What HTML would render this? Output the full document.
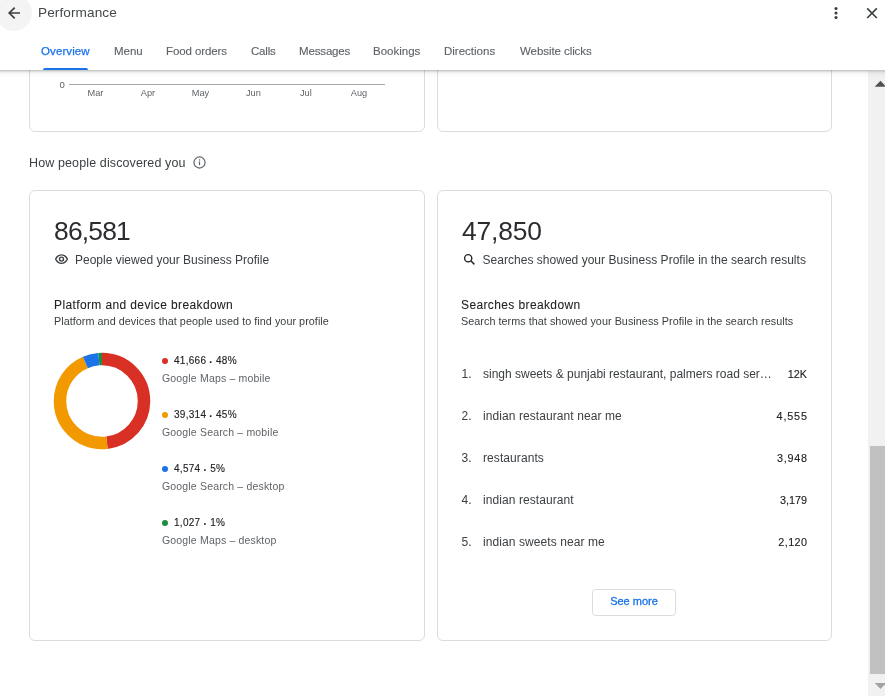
<!DOCTYPE html>
<html><head><meta charset="utf-8">
<style>
*{box-sizing:border-box;margin:0;padding:0}
html,body{width:885px;height:696px;overflow:hidden;background:#fff}
body{will-change:transform;font-family:"Liberation Sans",Arial,sans-serif;color:#202124;position:relative}
.abs{position:absolute}
.hdr{position:absolute;left:-20px;top:0;width:925px;height:70px;padding-left:20px;background:#fff;z-index:5;box-shadow:0 1px 2px rgba(60,64,67,.3),0 2px 6px rgba(60,64,67,.15)}
.hin{position:absolute;left:20px;top:0;width:885px;height:70px}
.backc{position:absolute;left:-4px;top:-5px;width:36px;height:36px;border-radius:50%;background:#f4f4f4}
.title{position:absolute;left:38px;top:2.8px;font-size:13.6px;line-height:20px;color:#46494c;letter-spacing:.1px}
.tab{position:absolute;top:44px;font-size:11.5px;line-height:14px;color:#5f6368;white-space:nowrap;-webkit-text-stroke:.12px #5f6368}
.tab.on{color:#1a73e8;-webkit-text-stroke:.25px #1a73e8;letter-spacing:.1px}
.uline{position:absolute;left:43px;top:68px;width:45px;height:2px;background:#1a73e8;border-radius:2px 2px 0 0}
.card{position:absolute;border:1px solid #dadce0;border-radius:6px;background:#fff}
.sbar{position:absolute;left:868px;top:71px;width:17px;height:625px;background:#f1f1f1}
.thumb{position:absolute;left:870px;top:446px;width:15px;height:228px;background:#c1c1c1}
.big{position:absolute;font-size:26.4px;line-height:30px;color:#2a2c2f;letter-spacing:-.8px}
.sub{position:absolute;font-size:12px;line-height:14px;color:#3c4043;white-space:nowrap}
.h3{position:absolute;font-size:12px;line-height:14px;color:#202124;white-space:nowrap;letter-spacing:.38px;-webkit-text-stroke:.07px #202124}
.sm{position:absolute;font-size:10.8px;letter-spacing:.04px;line-height:12px;color:#3c4043;white-space:nowrap}
.lg1{position:absolute;font-size:10px;line-height:12px;color:#202124;white-space:nowrap;letter-spacing:.28px;-webkit-text-stroke:.12px #202124}
.lg1 b{position:relative;top:1.7px}
.lg2{position:absolute;font-size:10.5px;line-height:14px;color:#5f6368;white-space:nowrap;letter-spacing:.17px}
.dot{position:absolute;width:6px;height:6px;border-radius:50%}
.row{position:absolute;font-size:12px;line-height:14px;color:#3c4043;white-space:nowrap;letter-spacing:.08px}
.val{position:absolute;font-size:10.8px;line-height:14px;color:#202124;white-space:nowrap;text-align:right;right:0;-webkit-text-stroke:.12px #202124}
.ax{position:absolute;font-size:9.2px;line-height:10px;color:#5f6368;white-space:nowrap}
</style></head><body>

<!-- content -->
<div class="card" style="left:29px;top:40px;width:396px;height:92px"></div>
<div class="card" style="left:437px;top:40px;width:395px;height:92px"></div>
<div class="abs" style="left:69px;top:84px;width:316px;height:1px;background:#a8a8a8"></div>
<div class="ax" style="left:59.6px;top:79.6px;font-size:9.6px">0</div>
<div class="ax" style="left:87.5px;top:88px">Mar</div>
<div class="ax" style="left:140.8px;top:88px">Apr</div>
<div class="ax" style="left:191.8px;top:88px">May</div>
<div class="ax" style="left:246px;top:88px">Jun</div>
<div class="ax" style="left:300px;top:88px">Jul</div>
<div class="ax" style="left:350.8px;top:88px">Aug</div>

<div class="abs" style="left:29px;top:156px;font-size:12.5px;line-height:15px;color:#3c4043;white-space:nowrap;letter-spacing:.12px">How people discovered you</div>
<svg class="abs" style="left:192px;top:155px" width="15" height="15" viewBox="0 0 15 15"><circle cx="7.5" cy="7.5" r="5.55" fill="none" stroke="#5f6368" stroke-width="1.2"/><rect x="6.9" y="6.5" width="1.2" height="3.6" fill="#5f6368"/><rect x="6.9" y="4.3" width="1.2" height="1.3" fill="#5f6368"/></svg>

<div class="card" style="left:29px;top:190px;width:396px;height:451px"></div>
<div class="card" style="left:437px;top:190px;width:395px;height:451px"></div>

<div class="big" style="left:54px;top:216px">86,581</div>
<svg class="abs" style="left:54px;top:253px" width="15" height="13" viewBox="0 0 15 13"><path d="M1.6 6.1 C3.2 3.2 5.3 1.8 7.5 1.8 S11.8 3.2 13.4 6.1 C11.8 9 9.7 10.4 7.5 10.4 S3.2 9 1.6 6.1Z" fill="none" stroke="#3c4043" stroke-width="1.35" stroke-linejoin="round"/><circle cx="7.5" cy="6.1" r="2" fill="none" stroke="#3c4043" stroke-width="1.4"/></svg>
<div class="sub" style="left:75px;top:253px">People viewed your Business Profile</div>
<div class="h3" style="left:54px;top:298px">Platform and device breakdown</div>
<div class="sm" style="left:54px;top:315px">Platform and devices that people used to find your profile</div>

<svg class="abs" style="left:52px;top:351px" width="100" height="100" viewBox="-50 -50 100 100">
<g transform="rotate(-90)" fill="none" stroke-width="12.5">
<circle r="42" stroke="#d93025" pathLength="100" stroke-dasharray="48.1 51.9" stroke-dashoffset="0"/>
<circle r="42" stroke="#f29900" pathLength="100" stroke-dasharray="45.4 54.6" stroke-dashoffset="-48.1"/>
<circle r="42" stroke="#1a73e8" pathLength="100" stroke-dasharray="5.3 94.7" stroke-dashoffset="-93.5"/>
<circle r="42" stroke="#1e8e3e" pathLength="100" stroke-dasharray="1.2 98.8" stroke-dashoffset="-98.8"/>
</g></svg>

<div class="dot" style="left:162px;top:358px;background:#d93025"></div>
<div class="lg1" style="left:174px;top:355px">41,666 <b>·</b> 48%</div>
<div class="lg2" style="left:162px;top:371px">Google Maps – mobile</div>
<div class="dot" style="left:162px;top:412px;background:#f29900"></div>
<div class="lg1" style="left:174px;top:409px">39,314 <b>·</b> 45%</div>
<div class="lg2" style="left:162px;top:425px">Google Search – mobile</div>
<div class="dot" style="left:162px;top:466px;background:#1a73e8"></div>
<div class="lg1" style="left:174px;top:463px">4,574 <b>·</b> 5%</div>
<div class="lg2" style="left:162px;top:479px">Google Search – desktop</div>
<div class="dot" style="left:162px;top:520px;background:#1e8e3e"></div>
<div class="lg1" style="left:174px;top:517px">1,027 <b>·</b> 1%</div>
<div class="lg2" style="left:162px;top:533px">Google Maps – desktop</div>

<div class="big" style="left:462px;top:216px;letter-spacing:-.15px">47,850</div>
<svg class="abs" style="left:462px;top:252px" width="14" height="14" viewBox="0 0 14 14"><circle cx="6.2" cy="6.2" r="3.6" fill="none" stroke="#26282b" stroke-width="1.4"/><path d="M8.8 8.8 L12.4 12.4" stroke="#26282b" stroke-width="1.5"/></svg>
<div class="sub" style="left:482.6px;top:253px;letter-spacing:.02px">Searches showed your Business Profile in the search results</div>
<div class="h3" style="left:461px;top:298px">Searches breakdown</div>
<div class="sm" style="left:461px;top:315px">Search terms that showed your Business Profile in the search results</div>

<div class="row" style="left:461.6px;top:367px">1.</div><div class="row" style="left:483px;top:367px;letter-spacing:0">singh sweets &amp; punjabi restaurant, palmers road ser…</div><div class="val" style="top:367px;right:78px;letter-spacing:0px;margin-right:-0px">12K</div>
<div class="row" style="left:461.6px;top:409px">2.</div><div class="row" style="left:483px;top:409px">indian restaurant near me</div><div class="val" style="top:409px;right:78px;letter-spacing:0.85px;margin-right:-0.85px">4,555</div>
<div class="row" style="left:461.6px;top:451px">3.</div><div class="row" style="left:483px;top:451px">restaurants</div><div class="val" style="top:451px;right:78px;letter-spacing:0.75px;margin-right:-0.75px">3,948</div>
<div class="row" style="left:461.6px;top:493px">4.</div><div class="row" style="left:483px;top:493px">indian restaurant</div><div class="val" style="top:493px;right:78px;letter-spacing:0px;margin-right:-0px">3,179</div>
<div class="row" style="left:461.6px;top:535px">5.</div><div class="row" style="left:483px;top:535px">indian sweets near me</div><div class="val" style="top:535px;right:78px;letter-spacing:0.4px;margin-right:-0.4px">2,120</div>

<div class="abs" style="left:592px;top:589px;width:84px;height:27px;border:1px solid #dadce0;border-radius:3.5px;font-size:11px;line-height:23.4px;text-align:center;color:#1a73e8;-webkit-text-stroke:.3px #1a73e8">See more</div>

<!-- scrollbar -->
<div class="sbar"></div>
<div class="thumb"></div>
<svg class="abs" style="left:868px;top:70px" width="17" height="626" viewBox="868 70 17 626"><path d="M874.7 86.8 L880.5 80.8 L886.3 86.8Z" fill="#505050"/><path d="M874.7 683 L880.5 689 L886.3 683Z" fill="#a3a3a3"/></svg>

<!-- header -->
<div class="hdr"><div class="hin">
<div class="backc"></div>
<svg class="abs" style="left:7px;top:6px" width="14" height="14" viewBox="0 0 14 14"><path d="M13 7 H2.8 M7.7 1.6 L2.2 7 L7.7 12.4" fill="none" stroke="#3c4043" stroke-width="1.7"/></svg>
<div class="title">Performance</div>
<svg class="abs" style="left:833px;top:5px" width="6" height="16" viewBox="0 0 6 16"><circle cx="3" cy="3.5" r="1.55" fill="#3c4043"/><circle cx="3" cy="8" r="1.55" fill="#3c4043"/><circle cx="3" cy="12.5" r="1.55" fill="#3c4043"/></svg>
<svg class="abs" style="left:866px;top:7px" width="12" height="12" viewBox="0 0 12 12"><path d="M1.2 1.4 L10.8 11 M10.8 1.4 L1.2 11" stroke="#3c4043" stroke-width="1.65" fill="none"/></svg>
<div class="tab on" style="left:41px">Overview</div>
<div class="tab" style="left:114px">Menu</div>
<div class="tab" style="left:166px;letter-spacing:-.1px">Food orders</div>
<div class="tab" style="left:251px;letter-spacing:-.2px">Calls</div>
<div class="tab" style="left:299px;letter-spacing:-.15px">Messages</div>
<div class="tab" style="left:373px">Bookings</div>
<div class="tab" style="left:444px">Directions</div>
<div class="tab" style="left:520px;letter-spacing:-.07px">Website clicks</div>
<div class="uline"></div>
</div></div>
</body></html>
